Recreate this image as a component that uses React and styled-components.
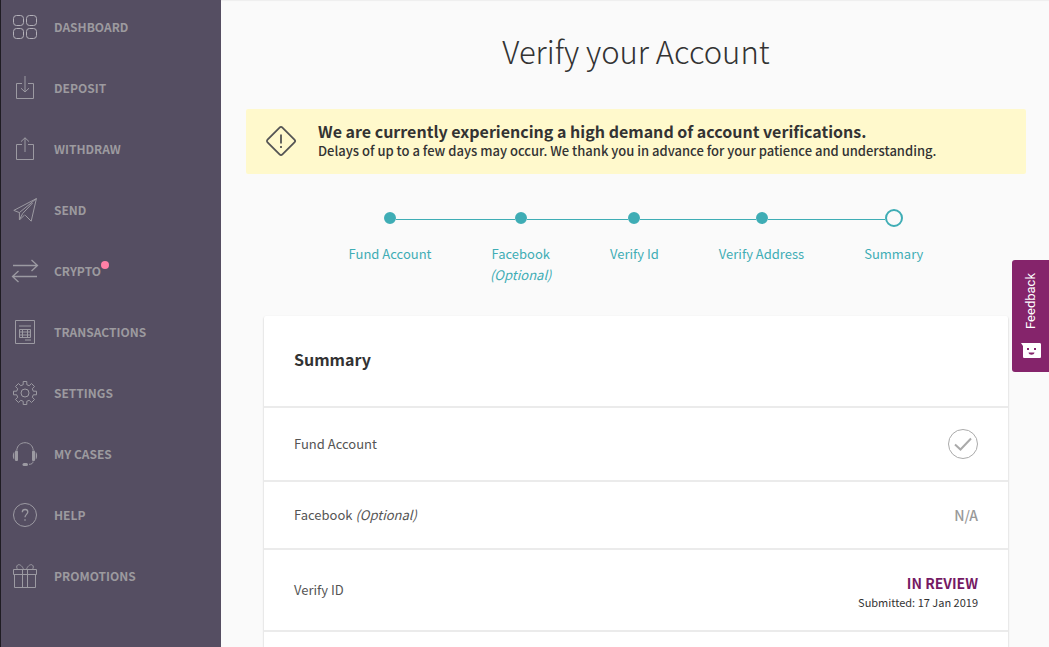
import styled, { createGlobalStyle } from "styled-components";

const menu = [
  { label: "Dashboard", icon: "dashboard" },
  { label: "Deposit", icon: "deposit" },
  { label: "Withdraw", icon: "withdraw" },
  { label: "Send", icon: "send" },
  { label: "Crypto", icon: "crypto", isNew: true },
  { label: "Transactions", icon: "transactions" },
  { label: "Settings", icon: "settings" },
  { label: "My Cases", icon: "cases" },
  { label: "Help", icon: "help" },
  { label: "Promotions", icon: "promotions" },
];

const steps = [
  { label: "Fund Account" },
  { label: "Facebook", note: "(Optional)" },
  { label: "Verify Id" },
  { label: "Verify Address" },
  { label: "Summary", current: true },
];

const icons = {
  dashboard: (
    <g stroke="#b3b0b8">
      <rect x="0.5" y="0.5" width="10" height="10" rx="3" />
      <rect x="13.5" y="0.5" width="10" height="10" rx="3" />
      <rect x="0.5" y="13.5" width="10" height="10" rx="3" />
      <rect x="13.5" y="13.5" width="10" height="10" rx="3" />
    </g>
  ),
  deposit: <path d="M9 7.5H3.5v15h17v-15H15M12 0v16M8 12.2l4 3.8 4-3.8" />,
  withdraw: <path d="M9 7.5H3.5v15h17v-15H15M12 15V.8M8 4.6 12 .8l4 3.8" />,
  send: (
    <path d="M23.4.6.8 12.4l5.6 2.2L23.4.6l-5.2 22.6-6-6M6.4 14.6v7.2l3.2-6.2L19.6 5M7 21.4l4.6-4.4" />
  ),
  crypto: <path strokeWidth="1.3" d="M0 6.500h24M18.500 1 24.500 6.500l-6 5.600M24 17.500H0M5.500 11.900-.5 17.500l6 5.600" />,
  transactions: (
    <>
      <path d="M2.500.500h19v23h-19zM6 6h12M12 20h6" />
      <path d="M6.500 9.500h11v8h-11zM6.500 12h11M6.500 15h11M9.500 9.500v8M14.500 9.500v8" />
    </>
  ),
  settings: (
    <>
      <path d="M10.200.500h3.600v3.200l2.400 1 2.300-2.200 3 3-2.200 2.300 1 2.400h3.200v3.600h-3.200l-1 2.400 2.200 2.300-3 3-2.300-2.200-2.400 1v3.200h-3.600v-3.200l-2.400-1-2.300 2.200-3-3 2.200-2.300-1-2.400H.5v-3.600h3.200l1-2.400-2.200-2.300 3-3 2.300 2.200 2.400-1z" />
      <circle cx="12" cy="12" r="4" />
    </>
  ),
  cases: (
    <>
      <path d="M3.800 8C4.200 3.600 7.600.700 12 .700S19.800 3.600 20.200 8M20 19.500c0 2-1.500 2.800-4 2.800" />
      <g fill="#9c9aa2" stroke="none">
        <rect x="2" y="8.500" width="3" height="10.500" rx="1" />
        <rect x="19" y="8.500" width="3" height="10.500" rx="1" />
        <path d="M1.300 10v7.500C-.6 16.500-.6 11 1.300 10zM22.700 10v7.500c1.900-1 1.900-6.500 0-7.500z" />
        <rect x="9.500" y="21" width="5.500" height="3" rx="1.500" />
      </g>
    </>
  ),
  help: (
    <>
      <circle cx="12" cy="12" r="11.500" />
      <path d="M9.300 9.200c0-1.700 1.100-2.700 2.800-2.700s2.700 1 2.700 2.500c0 2.200-2.800 2.600-2.800 5.200M12 16.300v1.400" strokeWidth="1.300" />
    </>
  ),
  promotions: (
    <>
      <path d="M.5 5.500h23v5H.5zM1.500 10.500h21v13h-21zM9.500 5.500v18M14.500 5.500v18" />
      <path d="M10.500 5.500H5C3.400 4.500 3.200 1.800 4.800.900c2.400-1 5 1.800 5.700 4.600zM13.500 5.500H19c1.600-1 1.800-3.700.200-4.600-2.400-1-5 1.800-5.700 4.600z" />
    </>
  ),
};

const App = () => {
  return (
    <Layout>
      <GlobalStyle />
      <Sidebar>
        {menu.map((item) => (
          <MenuLink href="#" key={item.label}>
            <MenuIcon viewBox="0 0 24 24" aria-hidden="true">
              {icons[item.icon]}
            </MenuIcon>
            <MenuLabel>
              {item.label}
              {item.isNew && <NewDot />}
            </MenuLabel>
          </MenuLink>
        ))}
      </Sidebar>
      <Main>
        <Title>Verify your Account</Title>
        <Notice>
          <NoticeIcon viewBox="0 0 32 32" aria-hidden="true">
            <rect x="5.500" y="5.500" width="21" height="21" rx="2" transform="rotate(45 16 16)" />
            <path d="M16 9.500v9M16 21v2" />
          </NoticeIcon>
          <div>
            <NoticeTitle>
              We are currently experiencing a high demand of account verifications.
            </NoticeTitle>
            <NoticeText>
              Delays of up to a few days may occur. We thank you in advance for your patience and
              understanding.
            </NoticeText>
          </div>
        </Notice>
        <Steps>
          {steps.map((step) => (
            <Step key={step.label}>
              <Track>
                <Line />
                <Dot $current={step.current} />
                <Line />
              </Track>
              <StepLabel>{step.label}</StepLabel>
              {step.note && <StepNote>{step.note}</StepNote>}
            </Step>
          ))}
        </Steps>
        <Card>
          <CardHeader>
            <h2>Summary</h2>
          </CardHeader>
          <Row>
            <span>Fund Account</span>
            <CheckIcon viewBox="0 0 30 30" role="img" aria-label="Done">
              <circle cx="15" cy="15" r="14.500" />
              <path d="M7 15.500 12.500 20.500 23 9.500" strokeWidth="2" />
            </CheckIcon>
          </Row>
          <Row>
            <span>
              Facebook <em>(Optional)</em>
            </span>
            <Status>N/A</Status>
          </Row>
          <Row>
            <span>Verify ID</span>
            <div>
              <Status $review>In review</Status>
              <Submitted>Submitted: 17 Jan 2019</Submitted>
            </div>
          </Row>
        </Card>
      </Main>
      <Feedback type="button">
        <FeedbackText>Feedback</FeedbackText>
        <FeedbackIcon viewBox="0 0 20 16" aria-hidden="true">
          <path fill="#fff" d="M0 0h18.500C19.500 0 20 .600 20 1.500v12c0 1-.5 1.500-1.500 1.500h-15C2.500 15 2 14.500 2 13.500V3z" />
          <path fill="#85246b" d="M6 5h2v2H6zM13 5h2v2h-2zM7.500 9.500h6c-.5 3-5.500 3-6 0z" />
        </FeedbackIcon>
      </Feedback>
    </Layout>
  );
};

export default App;

const GlobalStyle = createGlobalStyle`
  * {
    box-sizing: border-box;
  }
  body {
    margin: 0;
    background-color: #fafafa;
    color: #333;
    font-family: "Noto Sans CJK SC", "Noto Sans", sans-serif;
  }
  h1, h2, p {
    margin: 0;
  }
`;

const Layout = styled.div`
  display: flex;
  min-height: 100vh;
`;

const Sidebar = styled.nav`
  flex: 0 0 221px;
  padding-top: 1px;
  border-left: 1px solid #1f1c23;
  background-color: #554e62;
`;

const MenuLink = styled.a`
  display: flex;
  align-items: center;
  gap: 17px;
  height: 24px;
  margin: 14px 12px 37px;
  color: #9c9a9f;
  text-decoration: none;
`;

const MenuIcon = styled.svg`
  width: 24px;
  height: 24px;
  overflow: visible;
  fill: none;
  stroke: #9c9aa2;
  stroke-width: 1;
`;

const MenuLabel = styled.span`
  position: relative;
  font-size: 12px;
  font-weight: 700;
  line-height: 24px;
  text-transform: uppercase;
`;

const NewDot = styled.i`
  position: absolute;
  top: 2px;
  left: 100%;
  width: 8px;
  height: 8px;
  border-radius: 50%;
  background-color: #ff80a6;
`;

const Main = styled.main`
  flex: 1;
  display: flex;
  flex-direction: column;
  min-width: 0;
  padding: 28px 23px 0 25px;
  box-shadow: inset 0 2px 1px -1px #eee;
`;

const Title = styled.h1`
  margin-bottom: 35px;
  font-size: 31px;
  font-weight: 300;
  line-height: 46px;
  text-align: center;
`;

const Notice = styled.section`
  display: flex;
  align-items: center;
  gap: 21px;
  padding: 12px 19px 13px;
  border-radius: 2px;
  background-color: #fff9cc;
`;

const NoticeIcon = styled.svg`
  flex: none;
  width: 32px;
  height: 32px;
  fill: none;
  stroke: #555;
  stroke-width: 1.8;
`;

const NoticeTitle = styled.p`
  font-size: 16px;
  font-weight: 700;
  line-height: 20px;
`;

const NoticeText = styled.p`
  font-size: 13px;
  font-weight: 500;
  line-height: 20px;
`;

const Steps = styled.ol`
  display: flex;
  justify-content: center;
  margin: 35px 0 31px;
  padding: 0;
  list-style: none;
`;

const Line = styled.span`
  flex: 1;
  height: 4px;
  border-bottom: 1px solid #3fadb5;
`;

const Track = styled.div`
  display: flex;
  align-items: center;
  align-self: stretch;
  height: 18px;
  margin-bottom: 16px;
`;

const Step = styled.li`
  display: flex;
  flex-direction: column;
  align-items: center;
  color: #3fadb5;
  &:first-child ${Line}:first-child,
  &:last-child ${Line}:last-child {
    visibility: hidden;
  }
`;

const Dot = styled.span`
  width: ${({ $current }) => ($current ? "18px" : "12px")};
  height: ${({ $current }) => ($current ? "18px" : "12px")};
  border: 2px solid #3fadb5;
  border-radius: 50%;
  background-color: ${({ $current }) => ($current ? "transparent" : "#3fadb5")};
`;

const StepLabel = styled.span`
  padding: 0 30px;
  font-size: 13px;
  line-height: 21px;
`;

const StepNote = styled.em`
  font-size: 13px;
  line-height: 21px;
`;

const Card = styled.section`
  flex: 1;
  margin: 0 18px;
  border-radius: 2px 2px 0 0;
  background-color: #fff;
  box-shadow: 0 1px 2px rgba(0, 0, 0, 0.25);
`;

const CardHeader = styled.header`
  padding: 31px 30px 35px;
  border-bottom: 2px solid #ebebeb;
  h2 {
    font-size: 16px;
    font-weight: 700;
    line-height: 24px;
  }
`;

const Row = styled.div`
  display: flex;
  justify-content: space-between;
  align-items: center;
  padding: 21px 30px;
  border-bottom: 2px solid #ebebeb;
  color: #555;
  font-size: 13px;
  line-height: 24px;
  text-align: left;
`;

const CheckIcon = styled.svg`
  width: 30px;
  height: 30px;
  fill: none;
  stroke: #aaa;
`;

const Status = styled.p`
  color: ${({ $review }) => ($review ? "#751a64" : "#999")};
  font-size: 14px;
  font-weight: ${({ $review }) => ($review ? 700 : 500)};
  line-height: 24px;
  text-align: right;
  text-transform: uppercase;
`;

const Submitted = styled.p`
  color: #333;
  font-size: 11px;
  line-height: 14px;
  text-align: right;
`;

const Feedback = styled.button`
  position: fixed;
  top: 260px;
  right: 0;
  display: flex;
  flex-direction: column;
  align-items: center;
  gap: 14px;
  width: 37px;
  height: 112px;
  padding: 13px 0 0;
  border: 0;
  border-radius: 3px 0 0 3px;
  background-color: #85246b;
  color: #fff;
  cursor: pointer;
`;

const FeedbackText = styled.span`
  font-family: Roboto, sans-serif;
  font-size: 13px;
  line-height: 16px;
  writing-mode: vertical-rl;
  transform: rotate(180deg);
`;

const FeedbackIcon = styled.svg`
  width: 20px;
  height: 16px;
`;
